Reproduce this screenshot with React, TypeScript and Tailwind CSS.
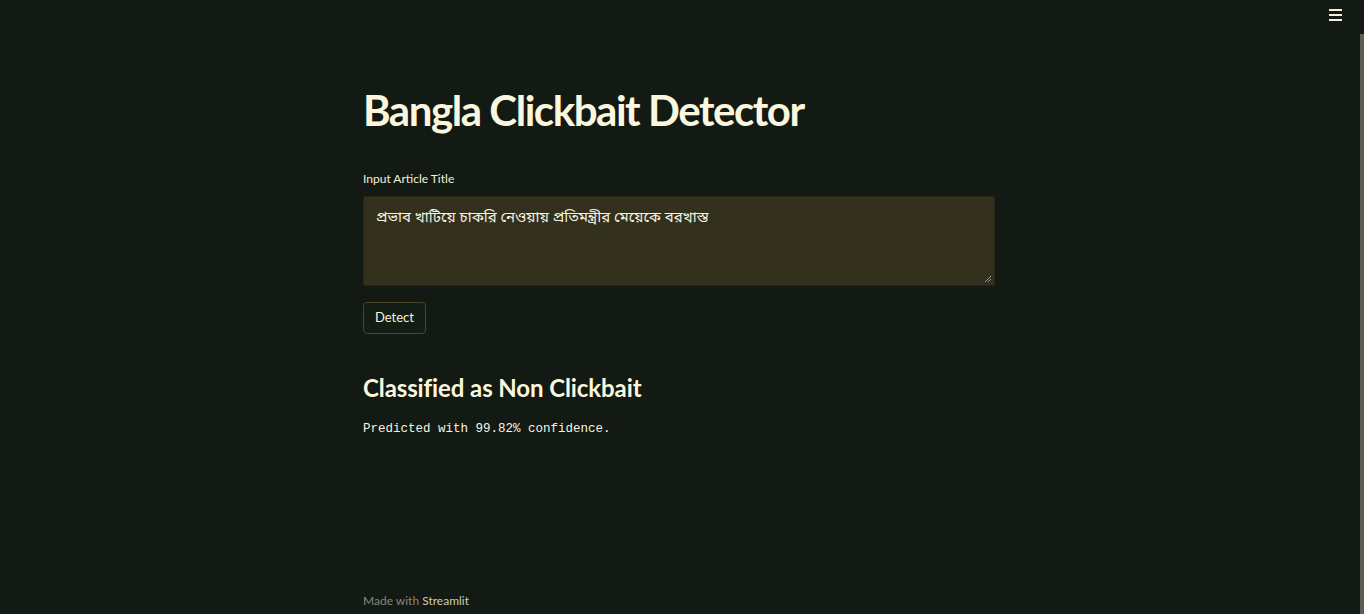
import React from "react";

export default function App() {
  return (
    <div
      className="w-full h-[614px] bg-[#121a13] flex overflow-hidden"
      style={{ fontFamily: "Lato, 'Noto Sans', sans-serif" }}
    >
      <div className="flex-1 flex flex-col relative">
        <div className="h-[30px] flex justify-end items-start pr-[18px] pt-[9px]">
          <div className="w-[13px] flex flex-col gap-[3px]">
            <div className="h-[2px] bg-[#f2efe0]" />
            <div className="h-[2px] bg-[#f2efe0]" />
            <div className="h-[2px] bg-[#f2efe0]" />
          </div>
        </div>
        <div className="flex-1 flex justify-center">
          <div className="w-[632px] mr-[2px] flex flex-col">
            <h1 className="mt-[58px] text-[42px] leading-[44px] font-bold text-[#fbf7de] tracking-[-1.45px]">
              Bangla Clickbait Detector
            </h1>
            <label className="mt-[39px] text-[12px] leading-[16px] text-[#f2efdc]">
              Input Article Title
            </label>
            <div className="mt-[9px] h-[90px] bg-[#33301d] border border-[#26241a] rounded-[2px] relative px-[12px] pt-[7px]">
              <span
                className="text-[15px] text-[#f5f2e0]"
                style={{ fontFamily: "'Noto Sans Bengali', 'Noto Sans', 'DejaVu Sans', sans-serif" }}
              >
                প্রভাব খাটিয়ে চাকরি নেওয়ায় প্রতিমন্ত্রীর মেয়েকে বরখাস্ত
              </span>
              <svg
                className="absolute right-[2px] bottom-[2px]"
                width="8"
                height="8"
                viewBox="0 0 8 8"
              >
                <line x1="1" y1="7" x2="7" y2="1" stroke="#9a9788" strokeWidth="1" />
                <line x1="4" y1="7" x2="7" y2="4" stroke="#9a9788" strokeWidth="1" />
              </svg>
            </div>
            <div className="mt-[16px]">
              <button className="h-[32px] px-[11px] rounded-[4px] border border-[#4a4628] bg-[#141d13] text-[13px] text-[#f5f2e0]">
                Detect
              </button>
            </div>
            <h3 className="mt-[40px] text-[24px] leading-[28px] font-bold text-[#fbf7de] tracking-[-0.1px]">
              Classified as Non Clickbait
            </h3>
            <p
              className="mt-[19px] text-[12.5px] leading-[16px] text-[#f7f4e2]"
              style={{ fontFamily: "'Liberation Mono', 'DejaVu Sans Mono', monospace" }}
            >
              Predicted with 99.82% confidence.
            </p>
            <div className="flex-1" />
            <div className="mb-[4px] text-[12px] text-[#8a877a]">
              Made with <span className="text-[#cfcbb8]">Streamlit</span>
            </div>
          </div>
        </div>
      </div>
      <div className="w-[4px] flex flex-col">
        <div className="h-[34px]" />
        <div className="flex-1 bg-[#5e5d54]" />
      </div>
    </div>
  );
}
